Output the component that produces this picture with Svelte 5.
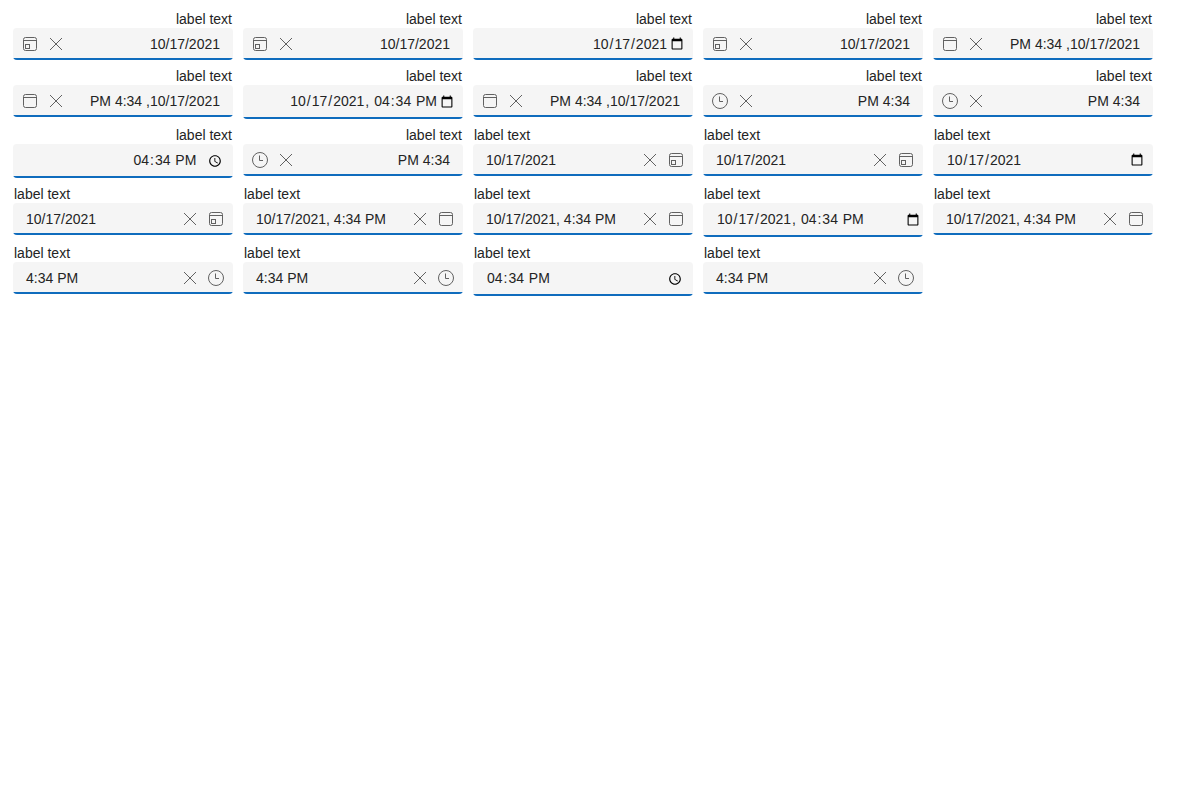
<script>
  const date = '10/17/2021';
  const items = [
    { kind: 'date', text: date, rtl: true },
    { kind: 'date', text: date, rtl: true },
    { kind: 'date', native: 'date', value: '2021-10-17', rtl: true },
    { kind: 'date', text: date, rtl: true },
    { kind: 'datetime', text: 'PM 4:34 ,10/17/2021', rtl: true },
    { kind: 'datetime', text: 'PM 4:34 ,10/17/2021', rtl: true },
    { kind: 'datetime', native: 'datetime-local', value: '2021-10-17T16:34', rtl: true },
    { kind: 'datetime', text: 'PM 4:34 ,10/17/2021', rtl: true },
    { kind: 'time', text: 'PM 4:34', rtl: true },
    { kind: 'time', text: 'PM 4:34', rtl: true },
    { kind: 'time', native: 'time', value: '16:34', rtl: true },
    { kind: 'time', text: 'PM 4:34', rtl: true },
    { kind: 'date', text: date },
    { kind: 'date', text: date },
    { kind: 'date', native: 'date', value: '2021-10-17' },
    { kind: 'date', text: date },
    { kind: 'datetime', text: '10/17/2021, 4:34 PM' },
    { kind: 'datetime', text: '10/17/2021, 4:34 PM' },
    { kind: 'datetime', native: 'datetime-local', value: '2021-10-17T16:34' },
    { kind: 'datetime', text: '10/17/2021, 4:34 PM' },
    { kind: 'time', text: '4:34 PM' },
    { kind: 'time', text: '4:34 PM' },
    { kind: 'time', native: 'time', value: '16:34' },
    { kind: 'time', text: '4:34 PM' }
  ];
</script>

<main>
  {#each items as item}
    <div class="cell" class:rtl={item.rtl}>
      <div class="label">label text</div>
      {#if item.native}
        <div class="field native {item.kind}">
          <input type={item.native} value={item.value} aria-label="label text" />
        </div>
      {:else}
        <div class="field">
          <span class="value">{item.text}</span>
          <svg class="icon" viewBox="0 0 16 16" aria-hidden="true">
            <path d="M2 2l12 12M14 2L2 14" />
          </svg>
          <svg class="icon" viewBox="0 0 16 16" aria-hidden="true">
            {#if item.kind === 'time'}
              <circle cx="8" cy="8" r="7.5" />
              <path d="M7.5 3.5v5h3.5" />
            {:else}
              <rect x="1.5" y="1.5" width="13" height="13" rx="2" />
              <path d="M1.5 4.5h13" />
              {#if item.kind === 'date'}
                <rect x="3.5" y="8.5" width="4" height="4" />
              {/if}
            {/if}
          </svg>
        </div>
      {/if}
    </div>
  {/each}
</main>

<style>
  :global(body) {
    background: #fff;
  }
  main {
    display: grid;
    grid-template-columns: repeat(5, 220px);
    column-gap: 10px;
    row-gap: 7px;
    align-items: start;
    padding: 10px 13px;
    font: 14px/18px 'Liberation Sans', Arial, sans-serif;
    color: #242424;
  }
  .label {
    padding: 0 1px;
    height: 18px;
  }
  .rtl .label {
    text-align: right;
  }
  .field {
    display: flex;
    align-items: center;
    gap: 10px;
    box-sizing: border-box;
    height: 32px;
    padding: 0 9px 0 13px;
    border-radius: 4px;
    background: linear-gradient(#0f6cbd, #0f6cbd) bottom / 100% 2px no-repeat #f5f5f5;
  }
  .rtl .field {
    flex-direction: row-reverse;
    padding: 0 13px 0 9px;
  }
  .value {
    flex: 1;
    white-space: nowrap;
  }
  .rtl .value {
    text-align: right;
  }
  .icon {
    flex: none;
    width: 16px;
    height: 16px;
    fill: none;
    stroke: #616161;
    stroke-width: 1;
  }
  .native.datetime,
  .native.time {
    height: 34px;
  }
  .native,
  .rtl .native {
    padding: 0 7px 0 13px;
  }
  .native.datetime {
    padding-right: 1px;
  }
  .rtl .native.datetime {
    padding-right: 7px;
  }
  input {
    width: 100%;
    box-sizing: border-box;
    margin: 0;
    padding: 0;
    border: 0;
    outline: 0;
    background: none;
    font: inherit;
    color: inherit;
  }
  .datetime input::-webkit-datetime-edit,
  .time input::-webkit-datetime-edit {
    padding-bottom: 2px;
  }
  .rtl input::-webkit-datetime-edit {
    text-align: right;
  }
  .rtl input::-webkit-calendar-picker-indicator {
    margin-inline-start: 0;
  }
  .rtl .time input::-webkit-calendar-picker-indicator {
    margin-inline-start: 8px;
  }
</style>
